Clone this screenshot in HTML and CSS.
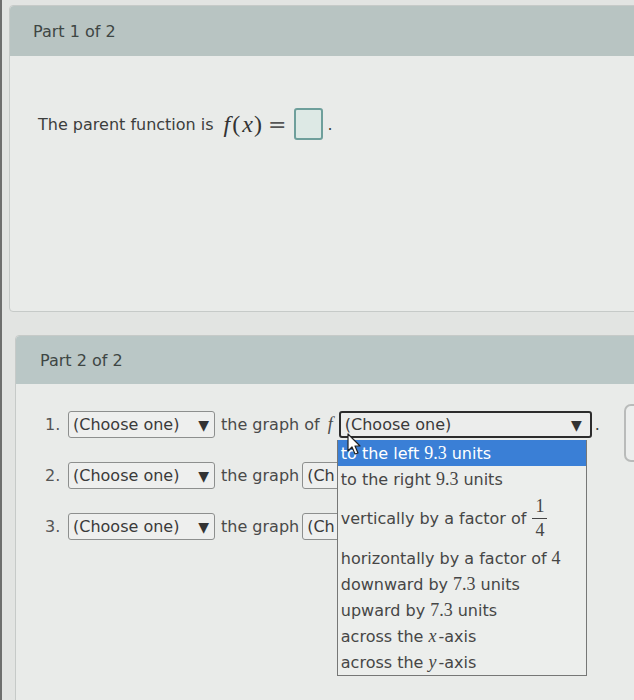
FILE: index.html
```html
<!DOCTYPE html>
<html>
<head>
<meta charset="utf-8">
<link rel="stylesheet" href="styles.css">
</head>
<body>
<div class="screen">
  <section class="card card1">
    <div class="card-head">Part 1 of 2</div>
    <div class="card-body body1">
      <p class="stmt">The parent function is <span class="math"><i>f</i>(<i>x</i>)</span> <span class="eq">=</span> <span class="ansbox"></span><span class="dot">.</span></p>
    </div>
  </section>

  <section class="card card2">
    <div class="card-head head2">Part 2 of 2</div>
    <div class="card-body body2">
      <div class="row">
        <span class="num">1.</span>
        <span class="sel">(Choose one) <span class="arr">▼</span></span>
        <span class="txt">the graph of <i class="mi">f</i></span>
        <span class="sel sel-wide">(Choose one)<span class="arr">▼</span>
          <ul class="menu">
            <li class="hl">to the left <span class="sn">9.3</span> units</li>
            <li>to the right <span class="sn">9.3</span> units</li>
            <li class="tall">vertically by a factor of <span class="frac"><span class="fn">1</span><span class="fd">4</span></span></li>
            <li>horizontally by a factor of <span class="sn">4</span></li>
            <li>downward by <span class="sn">7.3</span> units</li>
            <li>upward by <span class="sn">7.3</span> units</li>
            <li>across the <i class="mi">x</i>-axis</li>
            <li>across the <i class="mi">y</i>-axis</li>
          </ul>
        </span>
        <span class="dot2">.</span>
      </div>
      <div class="row">
        <span class="num">2.</span>
        <span class="sel">(Choose one) <span class="arr">▼</span></span>
        <span class="txt">the graph</span>
        <span class="sel sel-mid"><span class="clip">(Ch</span></span>
      </div>
      <div class="row">
        <span class="num">3.</span>
        <span class="sel">(Choose one) <span class="arr">▼</span></span>
        <span class="txt">the graph</span>
        <span class="sel sel-mid"><span class="clip">(Ch</span></span>
      </div>
    </div>
  </section>

  <div class="side-btn"></div>
  <svg class="cursor" width="16" height="24" viewBox="0 0 16 24">
    <path d="M1 1 L1 18 L5 14 L8 21 L11 20 L8 13 L13 13 Z" fill="#ffffff" stroke="#222" stroke-width="1.2" stroke-linejoin="round"/>
  </svg>
</div>
</body>
</html>
```

FILE: styles.css
```css
* { box-sizing: border-box; }
body {
  margin: 0;
  background: #e3e5e3;
  font-family: "DejaVu Sans", Verdana, sans-serif;
  color: #3c3e3d;
}
.screen {
  position: relative;
  width: 634px;
  height: 700px;
  overflow: hidden;
  border-left: 2px solid #6e6f6e;
  padding-top: 5px;
  background: #e2e4e2;
}
.card {
  margin-right: -20px;
  border: 1px solid #c6cac8;
  border-radius: 4px;
  background: #e9ebe9;
}
.card1 { margin-left: 7px; }
.card2 { margin-left: 13px; margin-top: 23px; }
.card-head {
  height: 50px;
  display: flex;
  align-items: center;
  padding-left: 23px;
  background: #b8c4c2;
  font-size: 16px;
  color: #3e4644;
  border-radius: 4px 4px 0 0;
}
.head2 { height: 48px; padding-left: 24px; background: #bac7c6; }
.body1 { height: 255px; padding: 56px 0 0 28px; }
.stmt {
  margin: 0;
  font-size: 16px;
  display: flex;
  align-items: center;
  height: 24px;
}
.math {
  font-family: "Liberation Serif", "Times New Roman", serif;
  font-size: 24px;
  margin-left: 10px;
  color: #333;
}
.math i { font-style: italic; }
.math i:first-child { margin-right: 2px; }
.math i:last-child { margin: 0 1px 0 2px; }
.eq { font-family: "DejaVu Sans", sans-serif; font-size: 22px; margin: 0 8px 0 6px; color: #555; }
.ansbox {
  display: inline-block;
  width: 29px;
  height: 32px;
  border: 2px solid #6e9f9b;
  border-radius: 3px;
  background: #dde9e5;
}
.dot { margin-left: 4px; }

.body2 { height: 340px; padding: 27px 0 0 29px; }
.row {
  display: flex;
  align-items: center;
  height: 27px;
  margin-bottom: 24px;
  font-size: 16px;
}
.num { width: 23px; color: #555; }
.sel {
  position: relative;
  display: inline-flex;
  align-items: center;
  justify-content: space-between;
  width: 147px;
  height: 27px;
  padding: 0 5px 0 4px;
  border: 1px solid #8d8f8e;
  border-radius: 3px;
  background: #eeefee;
  font-size: 16px;
  color: #3a3a3a;
  white-space: nowrap;
}
.arr { font-size: 14px; color: #333; }
.txt { margin-left: 6px; color: #4a4a4a; }
.mi {
  font-family: "Liberation Serif", "Times New Roman", serif;
  font-style: italic;
  font-size: 18px;
}
.txt .mi { margin-left: 3px; }
.sel-wide {
  width: 253px;
  margin-left: 6px;
  border: 2px solid #2c2c2c;
  padding-right: 8px;
  background: #ecedec;
}
.sel-mid { width: 200px; margin-left: 3px; justify-content: flex-start; }
.clip { display: block; }
.dot2 { margin-left: 3px; }

.menu {
  position: absolute;
  top: 27px;
  left: -4px;
  width: 250px;
  margin: 0;
  padding: 0;
  list-style: none;
  border: 1px solid #767776;
  border-top: none;
  background: #eceeec;
  font-size: 16px;
  color: #464646;
  z-index: 5;
}
.menu li {
  height: 26px;
  display: flex;
  align-items: center;
  padding-left: 3px;
  white-space: nowrap;
}
.menu li.hl { background: #3a7fd6; color: #ffffff; }
.menu li.tall { height: 53px; }
.sn {
  font-family: "Liberation Serif", "Times New Roman", serif;
  font-size: 18px;
  margin: 0 5px 0 5px;
}
.menu .mi { margin: 0 2px 0 5px; }
.frac {
  display: inline-flex;
  flex-direction: column;
  align-items: center;
  margin-left: 6px;
  font-family: "Liberation Serif", "Times New Roman", serif;
  font-size: 18px;
  line-height: 21px;
}
.fn { border-bottom: 1px solid #444; padding: 0 3px 1px 3px; }
.fd { padding-top: 1px; }

.side-btn {
  position: absolute;
  left: 622px;
  top: 404px;
  width: 30px;
  height: 58px;
  border: 2px solid #b9bbba;
  border-radius: 7px;
  background: #eceeed;
}
.cursor {
  position: absolute;
  left: 345px;
  top: 433px;
  z-index: 10;
}
```
